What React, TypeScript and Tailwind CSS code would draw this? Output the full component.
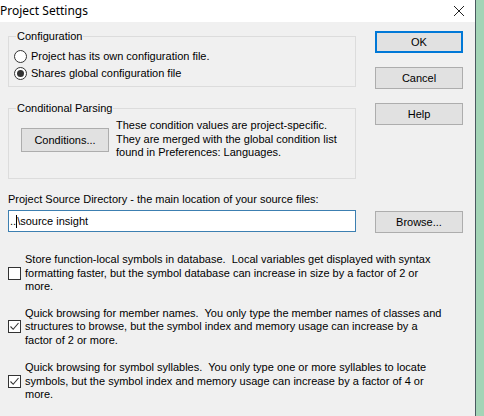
import React from 'react';

const font = "font-['Liberation_Sans',Arial,sans-serif]";

const GroupBox = ({ label, className, children }: { label: string; className?: string; children: React.ReactNode }) => (
    <div className={`relative border border-[#dcdcdc] ${className ?? ''}`}>
        <span className="absolute -top-[8px] left-[7px] bg-[#f0f0f0] px-[1px] leading-[14px]">{label}</span>
        {children}
    </div>
);

const Radio = ({ checked, label }: { checked?: boolean; label: string }) => (
    <div className="flex h-[17px] items-center">
        <span className="ml-[5px] flex h-[13px] w-[13px] items-center justify-center rounded-full border border-[#333] bg-white">
            {checked && <span className="h-[7px] w-[7px] rounded-full bg-[#333]" />}
        </span>
        <span className="ml-[4px]">{label}</span>
    </div>
);

const Button = ({ label, primary, className }: { label: string; primary?: boolean; className?: string }) => (
    <div
        className={`flex h-[22px] w-[88px] items-center justify-center bg-[#e1e1e1] ${
            primary ? 'border-2 border-[#0078d7]' : 'border border-[#adadad]'
        } ${className ?? ''}`}
    >
        {label}
    </div>
);

const CheckOption = ({ checked, lines, className }: { checked?: boolean; lines: string[]; className?: string }) => (
    <div className={`flex items-center ${className ?? ''}`}>
        <span className="flex h-[13px] w-[13px] shrink-0 items-center justify-center border border-[#333] bg-white">
            {checked && (
                <svg width="11" height="11" viewBox="0 0 11 11">
                    <path d="M1.5 5.5 L4.2 8.3 L9.5 2" fill="none" stroke="#333" strokeWidth="1.1" />
                </svg>
            )}
        </span>
        <div className="ml-[4px] whitespace-pre leading-[13.5px]">
            {lines.map((l, i) => (
                <div key={i}>{l}</div>
            ))}
        </div>
    </div>
);

export default function App() {
    return (
        <div className={`flex h-[416px] w-[484px] overflow-hidden text-[11px] text-black ${font}`}>
            <div className="flex w-[476px] flex-col border-r border-[#4a5a60] bg-[#f0f0f0]">
                {/* Title bar */}
                <div className="flex h-[22px] shrink-0 items-center justify-between bg-white">
                    <span className="font-['Noto_Sans',sans-serif] text-[12px] leading-none">Project Settings</span>
                    <svg width="12" height="12" viewBox="0 0 12 12" className="mr-[10px]">
                        <path d="M1 1 L11 11 M11 1 L1 11" stroke="#222" strokeWidth="1" />
                    </svg>
                </div>

                <div className="pl-[8px]">
                    <div className="flex items-start gap-[19px]">
                        {/* Left column */}
                        <div className="w-[348px] pt-[14px]">
                            <GroupBox label="Configuration" className="pt-[11px] pb-[4px]">
                                <Radio label="Project has its own configuration file." />
                                <Radio checked label="Shares global configuration file" />
                            </GroupBox>

                            <GroupBox label="Conditional Parsing" className="mt-[21px] h-[71px]">
                                <div className="flex items-start">
                                    <Button label="Conditions..." className="mt-[19px] ml-[12px] h-[24px]" />
                                    <div className="mt-[10px] ml-[7px] leading-[13.5px]">
                                        <div>These condition values are project-specific.</div>
                                        <div>They are merged with the global condition list</div>
                                        <div>found in Preferences: Languages.</div>
                                    </div>
                                </div>
                            </GroupBox>
                        </div>

                        {/* Right column */}
                        <div className="pt-[9px]">
                            <Button primary label="OK" />
                            <Button label="Cancel" className="mt-[14px]" />
                            <Button label="Help" className="mt-[14px]" />
                        </div>
                    </div>

                    <div className="mt-[14px] leading-[13px]">Project Source Directory - the main location of your source files:</div>
                    <div className="mt-[4px] flex items-start gap-[19px]">
                        <div className="flex h-[22px] w-[348px] items-center border border-[#3c7fb1] bg-white pl-[1px]">
                            <span>..</span>
                            <span className="h-[13px] w-[1px] bg-black" />
                            <span>\source insight</span>
                        </div>
                        <Button label="Browse..." className="mt-[1px]" />
                    </div>

                    <CheckOption
                        className="mt-[20px]"
                        lines={[
                            'Store function-local symbols in database.  Local variables get displayed with syntax',
                            'formatting faster, but the symbol database can increase in size by a factor of 2 or',
                            'more.',
                        ]}
                    />
                    <CheckOption
                        checked
                        className="mt-[13px]"
                        lines={[
                            'Quick browsing for member names.  You only type the member names of classes and',
                            'structures to browse, but the symbol index and memory usage can increase by a',
                            'factor of 2 or more.',
                        ]}
                    />
                    <CheckOption
                        checked
                        className="mt-[14px]"
                        lines={[
                            'Quick browsing for symbol syllables.  You only type one or more syllables to locate',
                            'symbols, but the symbol index and memory usage can increase by a factor of 4 or',
                            'more.',
                        ]}
                    />
                </div>
            </div>
            <div className="flex-1 bg-[#a3d4b6]" />
        </div>
    );
}
